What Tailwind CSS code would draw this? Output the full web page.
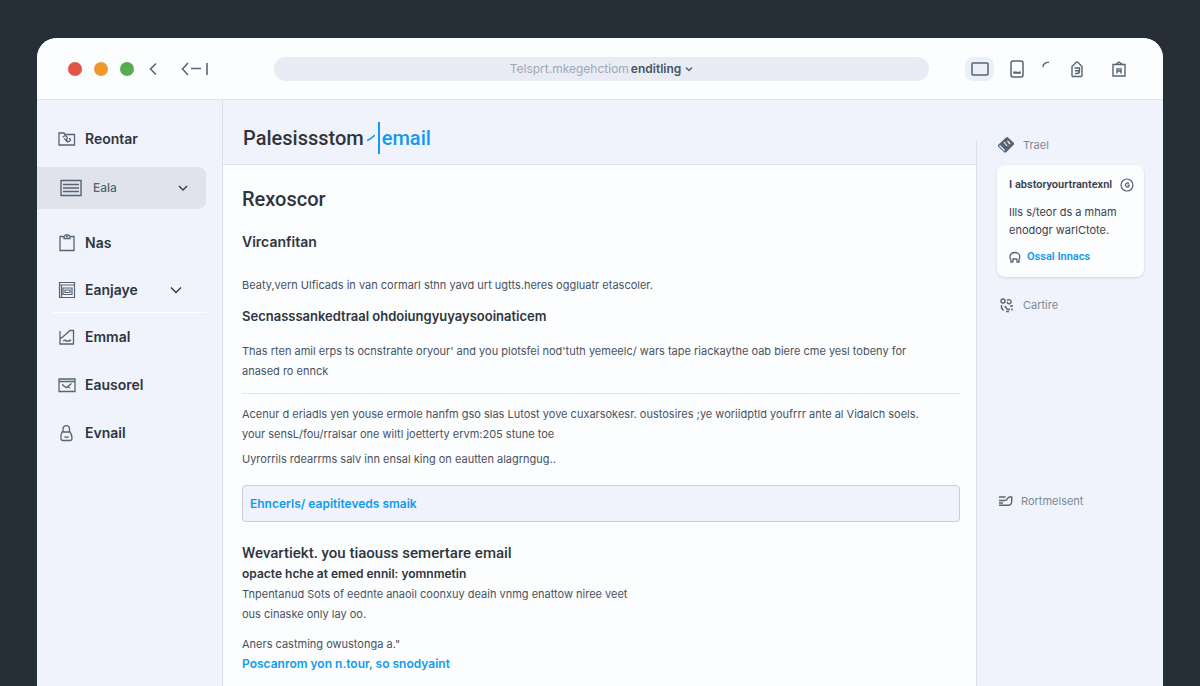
<!DOCTYPE html>
<html lang="en">
<head>
  <meta charset="UTF-8">
  <meta name="viewport" content="width=device-width, initial-scale=1.0">
  <title>Email</title>
  <script src="https://cdn.jsdelivr.net/npm/@tailwindcss/browser@4"></script>
</head>
<body class="bg-[#262e38] font-['Inter','Liberation_Sans',sans-serif] text-[#2f3540]">
  <div class="flex flex-col min-h-screen pt-[38px] px-[37px]">
    <div class="flex flex-col flex-1 bg-[#f0f3fc] rounded-t-[20px] overflow-hidden">

      <!-- Browser bar -->
      <header class="flex items-center h-[62px] pl-[31px] pr-9 bg-[#fcfdff] border-b border-[#dfe2ec] text-[#566475]">
        <div class="flex items-center gap-3">
          <span class="w-[14px] h-[14px] rounded-full bg-[#e35247]"></span>
          <span class="w-[14px] h-[14px] rounded-full bg-[#ee982f]"></span>
          <span class="w-[14px] h-[14px] rounded-full bg-[#56ad4f]"></span>
        </div>
        <button class="ml-[15px]" aria-label="Back">
          <svg class="w-2 h-4" viewBox="0 0 8 16" fill="none" stroke="currentColor" stroke-width="1.6"><path d="M7 2.500 1.500 8 7 13.500"/></svg>
        </button>
        <button class="ml-6" aria-label="Back to start">
          <svg class="w-7 h-4" viewBox="0 0 28 16" fill="none" stroke="currentColor" stroke-width="1.600"><path d="M7 2 1.500 8 7 14M10 7.500h10M26 2v12"/></svg>
        </button>
        <button class="flex flex-1 items-center justify-center h-6 ml-[65px] mr-9 rounded-full bg-[#e9ecf5] text-xs">
          <span class="text-[#a0a8b4]">Telsprt.mkegehctiom</span>
          <span class="ml-[2px] font-semibold text-[#485563]">enditling</span>
          <svg class="w-2 h-2 ml-1" viewBox="0 0 8 8" fill="none" stroke="currentColor" stroke-width="1.500"><path d="m1 2.500 3 3 3-3"/></svg>
        </button>
        <div class="flex items-center">
          <button class="flex items-center justify-center w-[29px] h-6 rounded-lg bg-[#ebeff8]" aria-label="Desktop">
            <svg class="w-[18px] h-[14px]" viewBox="0 0 18 14" fill="none" stroke="currentColor" stroke-width="1.500"><rect x="1" y="1" width="16" height="12" rx="1"/></svg>
          </button>
          <button class="ml-4" aria-label="Phone">
            <svg class="w-[14px] h-[18px]" viewBox="0 0 14 18" fill="none" stroke="currentColor" stroke-width="1.500"><rect x="1" y="1" width="12" height="16" rx="2"/><path d="M4 11.500v1.500h6v-1.500M4 13l2-1 2 1 2-1"/></svg>
          </button>
          <svg class="w-2 h-2 ml-[18px] mb-2" viewBox="0 0 8 8" fill="none" stroke="currentColor" stroke-width="1.400"><path d="M1 6C1 3 4 1 7 1.500"/></svg>
          <button class="ml-5" aria-label="Lock">
            <svg class="w-[14px] h-[18px]" viewBox="0 0 14 18" fill="none" stroke="currentColor" stroke-width="1.400"><path d="M2 6.500 6 2.500a1.500 1.500 0 0 1 2 0l4 4v9a1 1 0 0 1-1 1H3a1 1 0 0 1-1-1zM4.500 8h5v3c0 1.500-1 2.500-2.500 2.500H5M5 10.700h4"/></svg>
          </button>
          <button class="ml-[27px]" aria-label="Trash">
            <svg class="w-4 h-[18px]" viewBox="0 0 16 18" fill="none" stroke="currentColor" stroke-width="1.400"><path d="M2 4.500h12V16H2zM4.500 4.500 8 2l3.500 2.500M6 8v5.500M10 8v5.500M6 11h4M8 8v2"/></svg>
          </button>
        </div>
      </header>

      <div class="flex flex-1">
        <!-- Sidebar -->
        <nav class="w-[186px] shrink-0 pt-[15px] border-r border-[#dcdfe9] text-sm font-semibold">
          <a href="#" class="flex items-center h-12 pl-5 gap-2">
            <svg class="w-5 h-5 text-[#566475]" viewBox="0 0 20 20" fill="none" stroke="currentColor" stroke-width="1.300"><path d="M2 16V4h5l1 1.500h9.500V16zM6 8.500c0-2 3-2 4-.500s0 2-1 2.500 1 3 3 2 2-3 0-3M7 9.500l4 3"/></svg>
            Reontar
          </a>
          <button class="flex items-center w-[169px] h-[42px] mt-1 pl-[22px] pr-[18px] rounded-r-lg bg-[#e0e3ec] font-medium text-xs text-[#566475]">
            <svg class="w-6 h-5" viewBox="0 0 24 20" fill="none" stroke="currentColor" stroke-width="1.400"><path d="M2 2.500h20v15H2zM4 6.500h16M4 10h16M4 13.500h16"/></svg>
            <span class="ml-[10px]">Eala</span>
            <svg class="w-[10px] h-[10px] ml-auto" viewBox="0 0 10 10" fill="none" stroke="#39424e" stroke-width="1.500"><path d="m1 3 4 4 4-4"/></svg>
          </button>
          <a href="#" class="flex items-center h-12 mt-[10px] pl-5 gap-2">
            <svg class="w-5 h-5 text-[#566475]" viewBox="0 0 20 20" fill="none" stroke="currentColor" stroke-width="1.300"><path d="M6.500 3.500H3v14h14v-14h-3.500M7 5.500v-2l1.500-1.500h3L13 3.500v2zM9 3.700h2"/></svg>
            Nas
          </a>
          <button class="flex items-center w-[169px] h-[45px] pl-5 pr-6 gap-2 text-left">
            <svg class="w-5 h-5 text-[#566475]" viewBox="0 0 20 20" fill="none" stroke="currentColor" stroke-width="1.200"><path d="M2.500 2.500h15v15h-15zM2.500 5h15M6 8h9v6.500H6zM8 10h5v2.500H8zM4.500 5v12"/></svg>
            Eanjaye
            <svg class="w-3 h-3 ml-auto" viewBox="0 0 12 12" fill="none" stroke="currentColor" stroke-width="1.300"><path d="m1 3.500 5 5 5-5"/></svg>
          </button>
          <hr class="ml-4 mr-4 border-white">
          <a href="#" class="flex items-center h-12 pl-5 gap-2">
            <svg class="w-5 h-5 text-[#566475]" viewBox="0 0 20 20" fill="none" stroke="currentColor" stroke-width="1.300"><path d="M3 4v13h13.500V3.500h-3.500L8 8l-5 4M6 14l2-1 1 1h3l1-1 1 1"/></svg>
            Emmal
          </a>
          <a href="#" class="flex items-center h-12 pl-5 gap-2">
            <svg class="w-5 h-5 text-[#566475]" viewBox="0 0 20 20" fill="none" stroke="currentColor" stroke-width="1.300"><path d="M2 4h16v12.500H2zM2 6.500h16M5 9.500c1 0 2 2.500 4.500 3L14.500 8.500M11 12l2 1"/></svg>
            Eausorel
          </a>
          <a href="#" class="flex items-center h-12 pl-5 gap-2">
            <svg class="w-5 h-5 text-[#566475]" viewBox="0 0 20 20" fill="none" stroke="currentColor" stroke-width="1.300"><path d="M5 9h8c1.500 2 2 4 2 6.500a2 2 0 0 1-2 2H6a2 2 0 0 1-2-2C3.500 13 4 11 5 9zM6 9V6c0-4.500 6.500-4.500 6.500 0v3M7.500 13.500c1 1 3 1 4 0"/></svg>
            Evnail
          </a>
        </nav>

        <!-- Message -->
        <main class="flex flex-col flex-1 min-w-0">
          <div class="flex items-center h-[65px] pt-3 pl-5 border-b border-[#dfe2ec] font-['Roboto'] text-xl font-medium">
            <h1>Palesissstom</h1>
            <svg class="w-2 h-2 ml-[3px] text-[#109bee]" viewBox="0 0 8 8" fill="none" stroke="currentColor" stroke-width="1.500"><path d="M0 6.500 3 5l5-4"/></svg>
            <span class="w-[2px] h-8 ml-[3px] bg-[#109bee]"></span>
            <a href="#" class="ml-[2px] text-[#109bee]">email</a>
          </div>
          <div class="flex-1 pt-5 pl-[19px] pr-4 pb-3 bg-[#fcfdff] text-[11px] leading-5 text-[#485260]">
            <h2 class="font-['Roboto'] text-xl leading-7 font-medium text-[#2f3540]">Rexoscor</h2>
            <h3 class="mt-[19px] text-sm leading-5 font-semibold text-[#2f3540]">Vircanfitan</h3>
            <p class="mt-[23px]">Beaty,vern Ulficads in van cormarl sthn yavd urt ugtts.heres oggluatr etascoler.</p>
            <h3 class="mt-[11px] text-[13px] leading-5 font-semibold text-[#2f3540]">Secnasssankedtraal ohdoiungyuyaysooinaticem</h3>
            <p class="mt-[15px]">Thas rten amil erps ts ocnstrahte oryour' and you plotsfei nod'tuth yemeelc/ wars tape riackaythe oab biere cme yesl tobeny for<br>anased ro ennck</p>
            <hr class="mt-3 border-[#e3e6f0]">
            <p class="mt-[10px]">Acenur d eriadls yen youse ermole hanfm gso slas Lutost yove cuxarsokesr. oustosires ;ye woriidptld youfrrr ante al Vidalch soels.<br>your sensL/fou/rralsar one wiltl joetterty ervm:205 stune toe</p>
            <p class="mt-[5px]">Uyrorrils rdearrms salv inn ensal king on eautten alagrngug..</p>
            <div class="flex items-center h-[37px] mt-4 px-[7px] border border-[#c9cddb] rounded-sm bg-[#f0f3fc]">
              <a href="#" class="font-semibold text-xs text-[#109bee]">Ehncerls/ eapititeveds smaik</a>
            </div>
            <h3 class="mt-[21px] font-['Roboto'] text-[15px] leading-5 font-medium text-[#2f3540]">Wevartiekt. you tiaouss semertare email</h3>
            <h4 class="mt-[1px] text-xs leading-5 font-semibold text-[#2f3540]">opacte hche at emed ennil: yomnmetin</h4>
            <p>Tnpentanud Sots of eednte anaoil coonxuy deaih vnmg enattow niree veet<br>ous cinaske only lay oo.</p>
            <p class="mt-[10px]">Aners castming owustonga a."</p>
            <a href="#" class="block font-semibold text-xs leading-5 text-[#109bee]">Poscanrom yon n.tour, so snodyaint</a>
          </div>
        </main>

        <!-- Right panel -->
        <div class="flex w-[187px] shrink-0 pt-10">
          <aside class="flex-1 pl-5 pr-[19px] border-l border-[#dfe2ec] text-[11px] text-[#7d8896]">
            <a href="#" class="flex items-center h-[10px] gap-2">
              <svg class="w-[18px] h-[18px] shrink-0 text-[#566475]" viewBox="0 0 18 18" fill="currentColor"><path d="M9 1.500 10.500 1l6.500 6v1.500L9 16.500H7.500L1 10.500V9z"/><path d="m2.500 9.500 5 5M7 6l3 4M10.500 5l2.500 3" stroke="#f0f3fc" stroke-width="1.200"/></svg>
              Trael
            </a>
            <div class="mt-[15px] pl-3 pr-[10px] pt-[10px] h-28 rounded-lg bg-[#fcfdff] shadow text-[#39424e]">
              <div class="flex items-center justify-between h-5 font-['Roboto'] font-semibold whitespace-nowrap">
                <h3>I abstoryourtrantexnl</h3>
                <svg class="w-[14px] h-[14px] shrink-0 text-[#566475]" viewBox="0 0 14 14" fill="none" stroke="currentColor" stroke-width="1.200"><circle cx="7" cy="7" r="6"/><path d="M9 5.500C8 4.500 5.500 5 5.500 7S8 9.500 9 8.500V7H7.500"/></svg>
              </div>
              <p class="mt-2 leading-[18px] whitespace-nowrap">Ills s/teor ds a mham<br>enodogr warlCtote.</p>
              <a href="#" class="flex items-center h-4 mt-[10px] gap-[6px] font-['Roboto'] font-semibold text-[#109bee]">
                <svg class="w-3 h-3 text-[#566475]" viewBox="0 0 12 12" fill="none" stroke="currentColor" stroke-width="1.300"><path d="M1.500 8.500C0 4 2 1.500 6 1.500s6 3 4 7V11H8V8M4 11H2V8.500M4 11V8h4"/></svg>
                Ossal Innacs
              </a>
            </div>
            <a href="#" class="flex items-center h-5 mt-[18px] gap-2 pl-[2px]">
              <svg class="w-4 h-4 text-[#566475]" viewBox="0 0 16 16" fill="none" stroke="currentColor" stroke-width="1.400"><path d="M8 3.500c2-2 5 0 4 2S8.500 7 8 5M2.500 8v3l2 2.500M6 9l2 3 3 .500M11 9h3M7 14.500h3M13 11.500v2"/><circle cx="4" cy="4" r="2"/></svg>
              Cartire
            </a>
            <a href="#" class="flex items-center h-5 mt-[176px] gap-2 pl-[2px]">
              <svg class="w-[14px] h-3" viewBox="0 0 14 12" fill="none" stroke="#566475" stroke-width="1.400"><path d="M0 2h6.500M0 5.500h6c2.500 0 2.500-3.500 4.500-3.500h2.200v4c0 2.500-1 4.200-3.200 4.200H0M0 8h4"/></svg>
              Rortmelsent
            </a>
          </aside>
        </div>
      </div>
    </div>
  </div>
</body>
</html>
